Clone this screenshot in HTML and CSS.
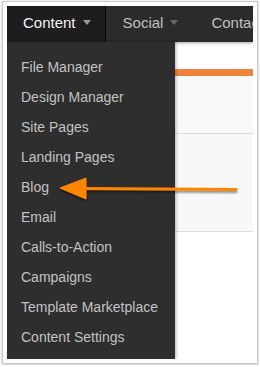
FILE: index.html
```html
<!DOCTYPE html>
<html lang="en">

<head>
  <meta charset="UTF-8">
  <title>Content menu</title>
  <link rel="stylesheet" href="styles.css">
</head>

<body>

  <div class="frame">
    <div class="page">
      <div class="nav">
        <div class="tab active">Content <span class="caret"></span></div>
        <div class="tab">Social <span class="caret"></span></div>
        <div class="tab">Contacts</div>
      </div>

      <div class="content">
        <div class="top-space"></div>
        <div class="accent-bar"></div>
        <div class="header-band"></div>
        <div class="panel"></div>
      </div>

      <ul class="dropdown">
        <li>File Manager</li>
        <li>Design Manager</li>
        <li>Site Pages</li>
        <li>Landing Pages</li>
        <li>Blog</li>
        <li>Email</li>
        <li>Calls-to-Action</li>
        <li>Campaigns</li>
        <li>Template Marketplace</li>
        <li>Content Settings</li>
      </ul>

      <!-- annotation arrow pointing at Blog -->
      <svg class="arrow" width="246" height="353" viewBox="0 0 246 353">
        <defs>
          <filter id="shadow" x="-10%" y="-50%" width="120%" height="200%">
            <feDropShadow dx="0" dy="2" stdDeviation="1.2" flood-color="#000" flood-opacity="0.45" />
          </filter>
        </defs>
        <g filter="url(#shadow)" fill="#ff8400" stroke="#ff8400">
          <line x1="76" y1="182.5" x2="229" y2="183.5" stroke-width="3.2" stroke-linecap="round" />
          <polygon points="53,182 79,172 79,193" stroke-width="1" stroke-linejoin="round" />
        </g>
      </svg>
    </div>
  </div>

</body>

</html>
```

FILE: styles.css
```css
body {
  margin: 0;
  background-color: #fff;
  font-family: 'Liberation Sans', Arial, Helvetica, sans-serif;
}

.frame {
  margin: 1px 2px;
  width: 246px;
  height: 353px;
  padding: 4px;
  background-color: #fff;
  border: 1px solid #c9c9c9;
  box-shadow: 0 1px 3px rgba(0, 0, 0, 0.25);
}

.page {
  position: relative;
  width: 246px;
  height: 353px;
  overflow: hidden;
  background-color: #fff;
}

.nav {
  display: flex;
  height: 36px;
  background-color: #2b2b2b;
  box-shadow: 0 1px 3px rgba(0, 0, 0, 0.35);
  position: relative;
  z-index: 1;
}

.tab {
  display: flex;
  align-items: center;
  padding: 0 14px 4px 16px;
  font-size: 15px;
  color: #c0c0c0;
  white-space: nowrap;
}

.tab.active {
  background-color: #1d1d1d;
  border-right: 1px solid #050505;
  color: #f4f4f4;
}

.tab + .tab {
  padding-left: 17px;
  padding-right: 16px;
}

.caret {
  width: 0;
  height: 0;
  margin-left: 7px;
  margin-top: 1px;
  border-left: 4.5px solid transparent;
  border-right: 4.5px solid transparent;
  border-top: 5px solid #6a6a6a;
}

.tab.active .caret {
  border-top-color: #9a9a9a;
}

.content {
  display: flex;
  flex-direction: column;
}

.top-space {
  height: 27px;
}

.accent-bar {
  height: 7px;
  background-color: #ee843b;
}

.header-band {
  height: 57px;
  background-color: #f9f9f9;
  border-bottom: 1px solid #dcdcdc;
}

.panel {
  height: 97px;
  background-color: #f8f8f8;
  border-bottom: 1px solid #dcdcdc;
}

.dropdown {
  position: absolute;
  top: 36px;
  left: 0;
  width: 168px;
  height: 317px;
  box-sizing: border-box;
  margin: 0;
  padding: 10px 0 0 14px;
  list-style: none;
  background-color: #2e2e2e;
  box-shadow: 1px 0 3px rgba(0, 0, 0, 0.3);
  z-index: 2;
}

.dropdown li {
  height: 30px;
  line-height: 30px;
  font-size: 14px;
  color: #c2c2c2;
  white-space: nowrap;
}

.arrow {
  position: absolute;
  top: 0;
  left: 0;
  z-index: 3;
}
```
